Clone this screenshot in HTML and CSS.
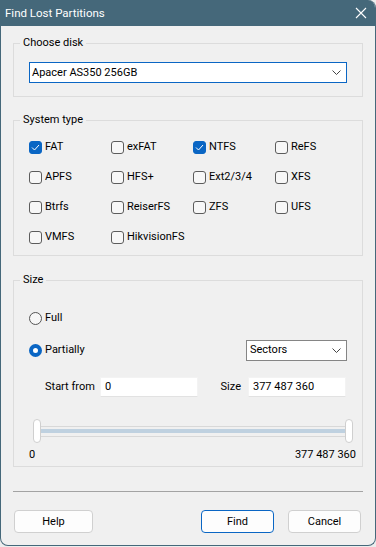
FILE: index.html
```html
<!DOCTYPE html>
<html lang="en">
<head>
    <meta charset="UTF-8">
    <meta name="viewport" content="width=device-width, initial-scale=1.0">
    <title>Find Lost Partitions</title>
    <link rel="stylesheet" href="styles.css">
</head>
<body>
    <div class="window">
        <div class="titlebar">
            <span class="title">Find Lost Partitions</span>
            <svg class="close" width="12" height="12" viewBox="0 0 12 12">
                <path d="M1 1 L11 11 M11 1 L1 11" stroke="#fff" stroke-width="1.1" fill="none"/>
            </svg>
        </div>

        <div class="dialog-body">
            <fieldset class="group">
                <legend>Choose disk</legend>
                <div class="disk-row">
                    <div class="select focused">
                        <span>Apacer AS350 256GB</span>
                        <svg class="chevron" width="9" height="5" viewBox="0 0 9 5"><polyline points="0.5,0.5 4.5,4.5 8.5,0.5" stroke="#444" fill="none"/></svg>
                    </div>
                </div>
            </fieldset>

            <fieldset class="group group-fs">
                <legend>System type</legend>
                <div class="fs-grid">
                    <div class="check checked"><span class="box"><svg width="9" height="7" viewBox="0 0 9 7"><polyline points="1,3.5 3.5,6 8,1" stroke="#fff" stroke-width="1" fill="none"/></svg></span>FAT</div>
                    <div class="check"><span class="box"></span>exFAT</div>
                    <div class="check checked"><span class="box"><svg width="9" height="7" viewBox="0 0 9 7"><polyline points="1,3.5 3.5,6 8,1" stroke="#fff" stroke-width="1" fill="none"/></svg></span>NTFS</div>
                    <div class="check"><span class="box"></span>ReFS</div>
                    <div class="check"><span class="box"></span>APFS</div>
                    <div class="check"><span class="box"></span>HFS+</div>
                    <div class="check"><span class="box"></span>Ext2/3/4</div>
                    <div class="check"><span class="box"></span>XFS</div>
                    <div class="check"><span class="box"></span>Btrfs</div>
                    <div class="check"><span class="box"></span>ReiserFS</div>
                    <div class="check"><span class="box"></span>ZFS</div>
                    <div class="check"><span class="box"></span>UFS</div>
                    <div class="check"><span class="box"></span>VMFS</div>
                    <div class="check"><span class="box"></span>HikvisionFS</div>
                </div>
            </fieldset>

            <fieldset class="group group-size">
                <legend>Size</legend>
                <div class="radio-row first">
                    <span class="radio"></span>Full
                </div>
                <div class="radio-row">
                    <span class="radio on"></span>Partially
                    <div class="select units">
                        <span>Sectors</span>
                        <svg class="chevron" width="9" height="5" viewBox="0 0 9 5"><polyline points="0.5,0.5 4.5,4.5 8.5,0.5" stroke="#444" fill="none"/></svg>
                    </div>
                </div>
                <div class="range-row">
                    <span class="field-label start">Start from</span>
                    <div class="input">0</div>
                    <span class="field-label size">Size</span>
                    <div class="input">377 487 360</div>
                </div>
                <div class="slider">
                    <span class="thumb"></span>
                    <div class="track"><div class="fill"></div></div>
                    <span class="thumb"></span>
                </div>
                <div class="slider-labels">
                    <span>0</span>
                    <span>377 487 360</span>
                </div>
            </fieldset>

            <div class="separator"></div>

            <div class="buttons">
                <button class="btn help">Help</button>
                <button class="btn find default">Find</button>
                <button class="btn cancel">Cancel</button>
            </div>
        </div>
    </div>
</body>
</html>
```

FILE: styles.css
```css
html, body {
    margin: 0;
    padding: 0;
    background: #ededed;
}

body {
    font-family: Roboto, "Noto Sans", sans-serif;
    font-size: 11px;
    color: #000;
}

.window {
    width: 376px;
    height: 546px;
    box-sizing: border-box;
    border: 1px solid #45687a;
    border-top: none;
    border-radius: 0 8px 8px 8px;
    background: #f0f0f0;
    overflow: hidden;
}

.titlebar {
    height: 26px;
    margin: 0 -1px;
    background: #45687a;
    display: flex;
    align-items: center;
    justify-content: space-between;
    padding: 0 9px 0 5px;
}

.title {
    color: #fff;
    font-size: 11.5px;
    line-height: 16px;
}

.close {
    display: block;
}

.dialog-body {
    padding: 9px 12px 0 12px;
}

/* group boxes */
.group {
    margin: 0;
    padding: 0;
    border: 1px solid #dcdcdc;
    min-width: 0;
}

.group legend {
    margin-left: 6px;
    padding: 0 3px;
    line-height: 16px;
}

.group + .group {
    margin-top: 15px;
}

.group-size {
    margin-top: 16px !important;
}

.disk-row {
    padding: 11px 15px 13px 15px;
}

/* combo boxes */
.select {
    height: 21px;
    box-sizing: border-box;
    background: #fff;
    border: 1px solid #858585;
    display: flex;
    align-items: center;
    justify-content: space-between;
    padding: 0 5px 0 2px;
    line-height: 16px;
}

.select.focused {
    border-color: #0a66c4;
}

.chevron {
    display: block;
}

/* checkboxes */
.fs-grid {
    display: grid;
    grid-template-columns: repeat(4, 82px);
    grid-auto-rows: 20px;
    row-gap: 10px;
    padding: 9px 15px 8px 15px;
}

.check {
    display: flex;
    align-items: center;
    line-height: 16px;
    white-space: nowrap;
}

.box {
    width: 13px;
    height: 13px;
    box-sizing: border-box;
    border: 1px solid #5c5c5c;
    border-radius: 3px;
    background: #f7f7f7;
    margin-right: 3px;
    display: flex;
    align-items: center;
    justify-content: center;
}

.check.checked .box {
    background: #0a66c4;
    border-color: #0a66c4;
}

.box svg {
    display: block;
}

/* radio buttons */
.radio-row {
    height: 20px;
    display: flex;
    align-items: center;
    padding: 0 15px;
    margin-top: 12px;
    line-height: 16px;
}

.radio-row.first {
    margin-top: 20px;
}

.radio {
    width: 13px;
    height: 13px;
    box-sizing: border-box;
    border: 1px solid #555;
    border-radius: 50%;
    background: #f7f7f7;
    margin-right: 3px;
}

.radio.on {
    border: 4px solid #0a66c4;
    background: #fff;
}

.select.units {
    width: 101px;
    margin-left: auto;
    padding-left: 3px;
}

/* start / size inputs */
.range-row {
    display: flex;
    align-items: center;
    margin-top: 17px;
    padding: 0 16px 0 31px;
    line-height: 16px;
    white-space: nowrap;
}

.field-label.start {
    width: 55px;
}

.field-label.size {
    margin-left: auto;
    margin-right: 7px;
}

.input {
    width: 98px;
    height: 20px;
    box-sizing: border-box;
    background: #fff;
    border: 1px solid #f3f3f3;
    border-bottom-color: #e2e2e2;
    padding: 0 4px;
    display: flex;
    align-items: center;
}

/* slider */
.slider {
    display: flex;
    align-items: center;
    height: 24px;
    margin-top: 22px;
    padding: 0 9px 0 19px;
}

.thumb {
    width: 8px;
    height: 24px;
    box-sizing: border-box;
    background: #fff;
    border: 1px solid #cfcfcf;
    border-radius: 4px;
}

.track {
    flex: 1;
    height: 11px;
    box-sizing: border-box;
    border-top: 1px solid #d8d8d8;
    border-bottom: 1px solid #d8d8d8;
    padding-top: 2px;
}

.fill {
    height: 4px;
    background: #bfd1e0;
}

.slider-labels {
    display: flex;
    justify-content: space-between;
    margin-top: 5px;
    padding: 0 6px 4px 15px;
    line-height: 14px;
}

.separator {
    height: 1px;
    background: #a3a3a3;
    margin-top: 24px;
}

/* buttons */
.buttons {
    display: flex;
    margin-top: 18px;
    padding: 0 2px 0 1px;
}

.btn {
    height: 23px;
    box-sizing: border-box;
    background: #fdfdfd;
    border: 1px solid #d0d0d0;
    border-radius: 4px;
    font-family: inherit;
    font-size: 11px;
    color: #000;
    padding: 0;
}

.btn.help {
    width: 79px;
}

.btn.find {
    width: 73px;
    margin-left: auto;
}

.btn.cancel {
    width: 73px;
    margin-left: 14px;
}

.btn.default {
    border-color: #0a66c4;
}
```
